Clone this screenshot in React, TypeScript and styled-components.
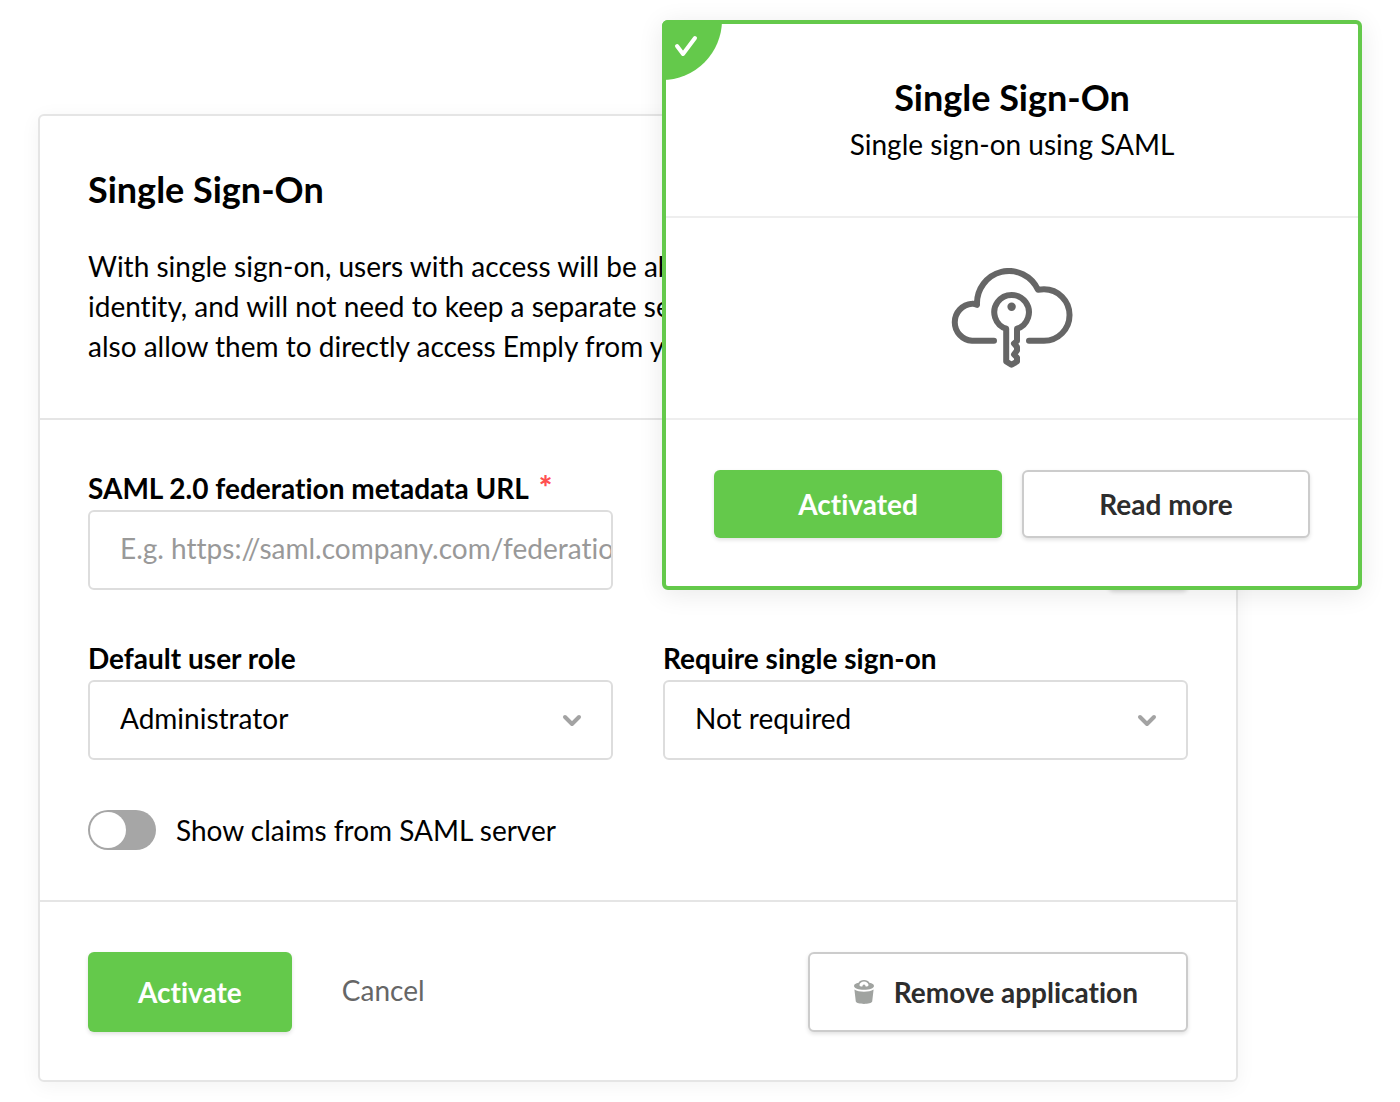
import React from "react";
import styled, { createGlobalStyle, css } from "styled-components";

const GlobalStyle = createGlobalStyle`
  *, *::before, *::after { box-sizing: border-box; }
  body {
    margin: 0;
    background: #fff;
    color: #000;
    font-family: Lato, "Liberation Sans", sans-serif;
    font-size: 28px;
    line-height: 40px;
    font-variant-ligatures: none;
  }
  h2, p { margin: 0; }
  button, input, select { font: inherit; color: inherit; font-variant-ligatures: inherit; }
`;

const Page = styled.main`
  position: relative;
  padding: 114px 162px 20px 38px;
`;

const Panel = styled.form`
  border: 2px solid #e5e5e5;
  border-radius: 6px;
  background: #fff;
  box-shadow: 0 4px 20px rgba(0, 0, 0, 0.05);
`;

const Section = styled.section`
  padding: 50px 48px;
  & + & { border-top: 2px solid #e5e5e5; }
`;

const Header = styled(Section)`
  padding: 48px 48px 52px;
`;

const Title = styled.h2`
  font-size: 36px;
  line-height: 50px;
  font-weight: 700;
`;

const Intro = styled.p`
  margin-top: 32px;
`;

const Fields = styled(Section)`
  display: grid;
  grid-template-columns: 1fr 1fr;
  gap: 50px;
`;

const Field = styled.div`
  display: flex;
  flex-direction: column;
  min-width: 0;
`;

const Label = styled.label`
  margin-bottom: 4px;
  line-height: 36px;
  font-weight: 700;
`;

const Required = styled.span`
  margin-left: 10px;
  color: #ff5050;
  font-size: 32px;
  line-height: 20px;
  font-weight: 900;
`;

const control = css`
  width: 100%;
  height: 80px;
  border: 2px solid #ddd;
  border-radius: 6px;
  background: #fff;
  outline: none;
`;

const TextInput = styled.input`
  ${control}
  padding: 0 0 4px 30px;
  &::placeholder { color: #999; opacity: 1; }
`;

const SelectBox = styled.div`
  display: grid;
  align-items: center;
  & > * { grid-area: 1 / 1; }
  & > svg {
    justify-self: end;
    margin-right: 30px;
    pointer-events: none;
  }
`;

const Select = styled.select`
  ${control}
  appearance: none;
  padding: 0 60px 4px 30px;
`;

const IconAction = styled.button`
  align-self: flex-end;
  width: 80px;
  height: 80px;
  margin-top: 40px;
  border: 2px solid #ccc;
  border-radius: 6px;
  background: #fff;
  box-shadow: 0 2px 4px rgba(0, 0, 0, 0.15);
`;

const ToggleLabel = styled.label`
  display: flex;
  align-items: center;
  gap: 20px;
  grid-column: 1 / -1;
`;

const Toggle = styled.input`
  appearance: none;
  display: flex;
  width: 68px;
  height: 40px;
  margin: 0;
  padding: 2px;
  border-radius: 20px;
  background: #a6a6a6;
  &::before {
    content: "";
    width: 36px;
    height: 36px;
    border-radius: 50%;
    background: #fff;
  }
  &:checked { background: #64c94b; justify-content: flex-end; }
`;

const Footer = styled(Section)`
  display: flex;
  align-items: center;
  gap: 50px;
  padding-bottom: 48px;
`;

const Button = styled.button<{ $primary?: boolean; $compact?: boolean }>`
  display: flex;
  align-items: center;
  justify-content: center;
  gap: 20px;
  height: ${(p) => (p.$compact ? 68 : 80)}px;
  padding: 0 ${(p) => (p.$compact ? 0 : p.$primary ? 50 : 48)}px;
  border: ${(p) => (p.$primary ? "0" : "2px solid #ccc")};
  border-radius: 6px;
  background: ${(p) => (p.$primary ? "#64c94b" : "#fff")};
  color: ${(p) => (p.$primary ? "#fff" : "#2d2d2d")};
  font-weight: 700;
  box-shadow: 0 2px 4px rgba(0, 0, 0, 0.12);
  & > svg { margin-left: -4px; }
`;

const LinkButton = styled.button`
  padding: 0 0 4px;
  border: 0;
  background: none;
  color: #666;
  margin-right: auto;
`;

/* The app card floats over the settings panel. */
const Card = styled.article`
  position: absolute;
  top: 20px;
  right: 38px;
  width: 50%;
  border: 4px solid #64c94b;
  border-radius: 6px;
  background: #fff;
  box-shadow: 0 4px 26px rgba(0, 0, 0, 0.09);
`;

const CardHeader = styled(Header)`
  display: flex;
  flex-direction: column;
  gap: 2px;
  text-align: center;
`;

const CardArt = styled(Section)`
  display: flex;
  justify-content: center;
  &&& { border-color: #eee; }
`;

const CardActions = styled(Section)`
  display: grid;
  grid-template-columns: 1fr 1fr;
  gap: 20px;
  padding-bottom: 48px;
  &&& { border-color: #eee; }
`;

const Ribbon = styled.span`
  position: absolute;
  top: -4px;
  left: -4px;
  width: 60px;
  height: 60px;
  border-radius: 6px 0 100% 0;
  background: #64c94b;
  & > svg { display: block; }
`;

const Chevron = () => (
  <svg width="22" height="16" viewBox="0 0 22 16" fill="none" stroke="#a3a3a3" strokeWidth="4" strokeLinecap="round" strokeLinejoin="round" aria-hidden="true">
    <path d="M4 5 11 12 18 5" />
  </svg>
);

const Trash = () => (
  <svg width="20" height="24" viewBox="0 0 20 24" fill="#a0a3a0" aria-hidden="true">
    <path d="M.4 9.600C5 12.600 15 12.600 19.600 9.600L18.200 21.600C17.800 23.300 13.800 24 10 24S2.200 23.300 1.800 21.600Z" />
    <path fillRule="evenodd" d="M4.600 2.800C5.400 .9 7.400 0 10 0s4.600.9 5.400 2.800C18.300 3.400 20 4.500 20 5.900 20 8.200 15.500 9.800 10 9.800S0 8.200 0 5.900C0 4.500 1.700 3.400 4.600 2.800ZM5.400 5C5.800 6.400 7.800 6.900 8.500 6.300 8.400 5.200 9.100 4.400 10 4.400s1.600.8 1.500 1.900c.7.6 2.700.1 3.100-1.300C14.200 2.900 12.200 1.600 10 1.600S5.800 2.900 5.400 5Z" />
  </svg>
);

const CloudKey = () => (
  <svg width="124" height="100" viewBox="0 0 124 100" fill="none" stroke="#666" strokeWidth="6" strokeLinecap="round" strokeLinejoin="round" aria-hidden="true">
    <path d="M44 72.800H22A18.600 18.600 0 0 1 22 35.700C24 35.500 25.500 36 27 36.800A32 32.500 0 0 1 88 21.800C90 21.500 92 21.300 94 21.300A25.500 25.700 0 0 1 94 72.800H79" />
    <path d="M56.200 93.500V60.700A17.300 17.300 0 1 1 67 60.700V73L64 75.500 67 79V82.500L64 86.500 67 89.500V93.500L61.500 96.800Z" />
    <circle cx="61.600" cy="38.700" r="4.200" fill="#666" stroke="none" />
  </svg>
);

const App = () => (
  <>
    <GlobalStyle />
    <Page>
      <Panel onSubmit={(e) => e.preventDefault()}>
        <Header>
          <Title>Single Sign-On</Title>
          <Intro>
            With single sign-on, users with access will be able to log in with their existing
            <br />
            identity, and will not need to keep a separate set of login details. It will
            <br />
            also allow them to directly access Emply from your own portal.
          </Intro>
        </Header>
        <Fields>
          <Field>
            <Label htmlFor="metadata">
              SAML 2.0 federation metadata URL<Required>*</Required>
            </Label>
            <TextInput id="metadata" placeholder="E.g. https://saml.company.com/federationmetadata" />
          </Field>
          <Field>
            <IconAction type="button" aria-label="Add" />
          </Field>
          <Field>
            <Label htmlFor="role">Default user role</Label>
            <SelectBox>
              <Select id="role">
                <option>Administrator</option>
              </Select>
              <Chevron />
            </SelectBox>
          </Field>
          <Field>
            <Label htmlFor="require">Require single sign-on</Label>
            <SelectBox>
              <Select id="require">
                <option>Not required</option>
              </Select>
              <Chevron />
            </SelectBox>
          </Field>
          <ToggleLabel>
            <Toggle type="checkbox" />
            Show claims from SAML server
          </ToggleLabel>
        </Fields>
        <Footer>
          <Button type="submit" $primary>Activate</Button>
          <LinkButton type="button">Cancel</LinkButton>
          <Button type="button">
            <Trash />
            Remove application
          </Button>
        </Footer>
      </Panel>
      <Card>
        <Ribbon>
          <svg width="60" height="60" viewBox="0 0 60 60" fill="none" stroke="#fff" strokeWidth="4" strokeLinecap="round" strokeLinejoin="round" aria-hidden="true">
            <path d="M15 26 21 34 33 18" />
          </svg>
        </Ribbon>
        <CardHeader>
          <Title>Single Sign-On</Title>
          <p>Single sign-on using SAML</p>
        </CardHeader>
        <CardArt>
          <CloudKey />
        </CardArt>
        <CardActions>
          <Button type="button" $primary $compact>Activated</Button>
          <Button type="button" $compact>Read more</Button>
        </CardActions>
      </Card>
    </Page>
  </>
);

export default App;
